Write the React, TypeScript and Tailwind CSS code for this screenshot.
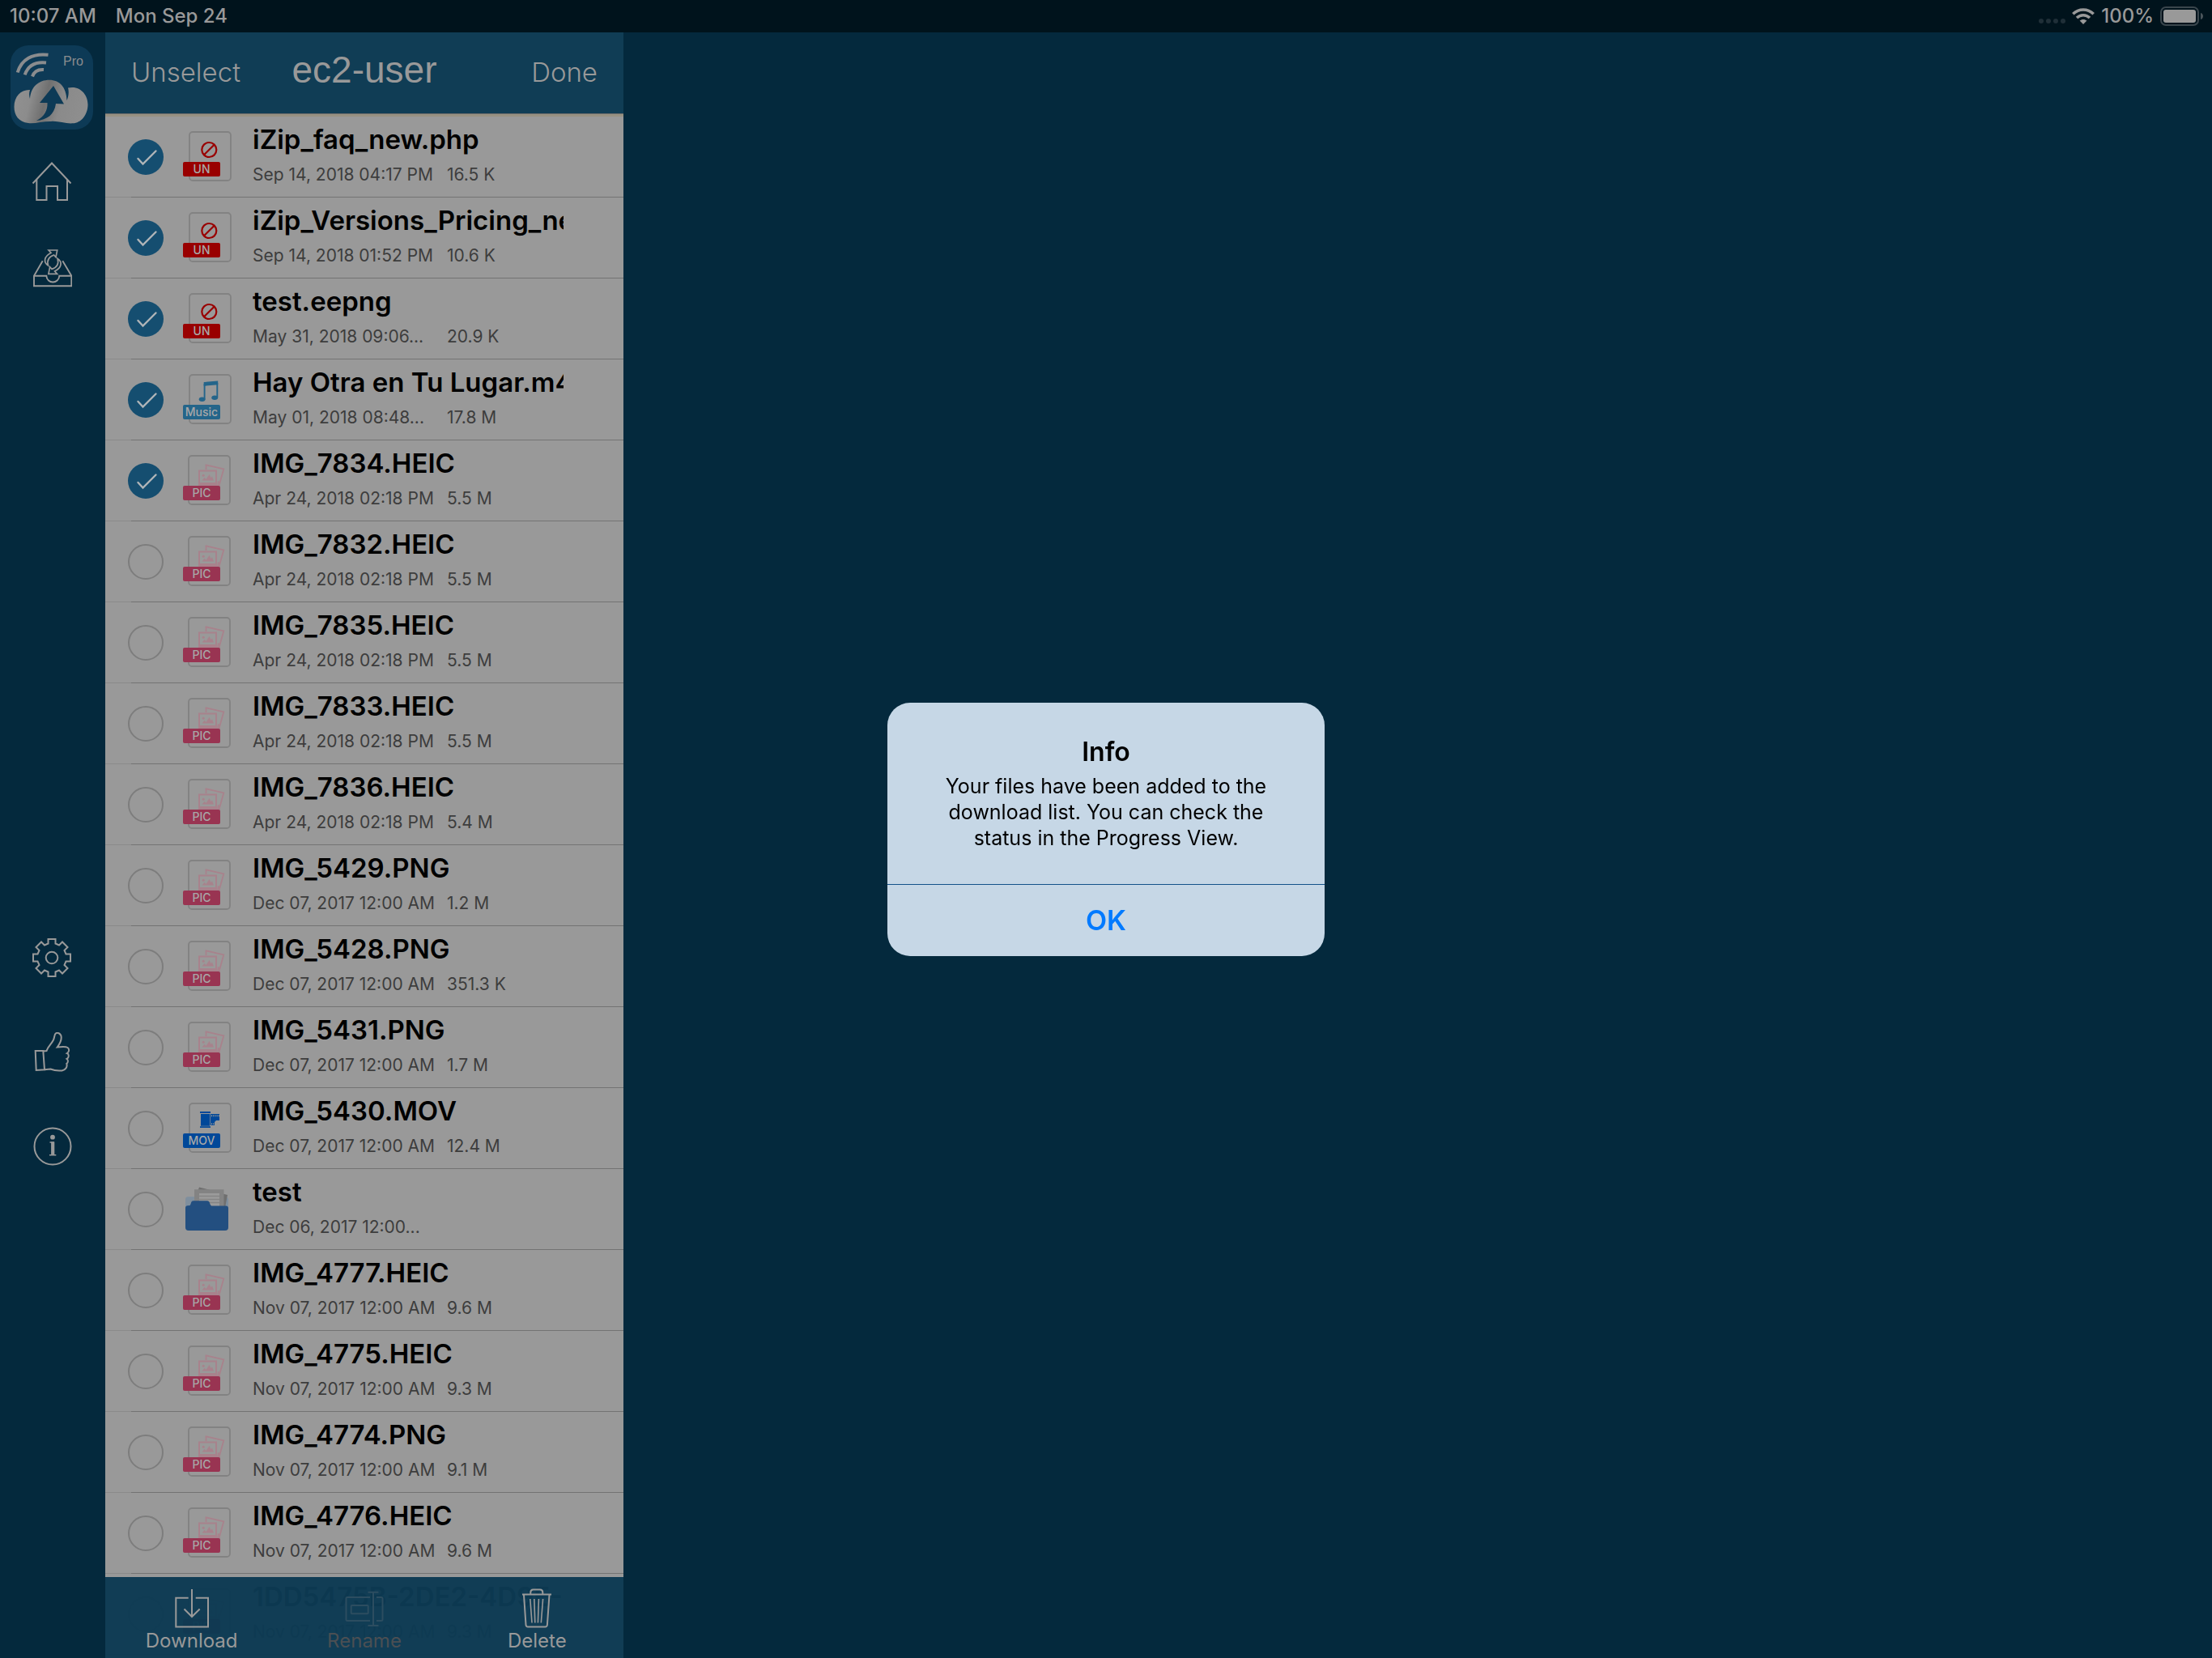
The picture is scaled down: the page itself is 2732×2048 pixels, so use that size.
import React, { useState } from 'react';

type FileKind = 'un' | 'music' | 'pic' | 'mov' | 'folder';

interface FileItem {
  name: string;
  date: string;
  size?: string;
  kind: FileKind;
}

const FILES: FileItem[] = [
  { name: 'iZip_faq_new.php', date: 'Sep 14, 2018 04:17 PM', size: '16.5 K', kind: 'un' },
  { name: 'iZip_Versions_Pricing_new.php', date: 'Sep 14, 2018 01:52 PM', size: '10.6 K', kind: 'un' },
  { name: 'test.eepng', date: 'May 31, 2018 09:06...', size: '20.9 K', kind: 'un' },
  { name: 'Hay Otra en Tu Lugar.m4a', date: 'May 01, 2018 08:48...', size: '17.8 M', kind: 'music' },
  { name: 'IMG_7834.HEIC', date: 'Apr 24, 2018 02:18 PM', size: '5.5 M', kind: 'pic' },
  { name: 'IMG_7832.HEIC', date: 'Apr 24, 2018 02:18 PM', size: '5.5 M', kind: 'pic' },
  { name: 'IMG_7835.HEIC', date: 'Apr 24, 2018 02:18 PM', size: '5.5 M', kind: 'pic' },
  { name: 'IMG_7833.HEIC', date: 'Apr 24, 2018 02:18 PM', size: '5.5 M', kind: 'pic' },
  { name: 'IMG_7836.HEIC', date: 'Apr 24, 2018 02:18 PM', size: '5.4 M', kind: 'pic' },
  { name: 'IMG_5429.PNG', date: 'Dec 07, 2017 12:00 AM', size: '1.2 M', kind: 'pic' },
  { name: 'IMG_5428.PNG', date: 'Dec 07, 2017 12:00 AM', size: '351.3 K', kind: 'pic' },
  { name: 'IMG_5431.PNG', date: 'Dec 07, 2017 12:00 AM', size: '1.7 M', kind: 'pic' },
  { name: 'IMG_5430.MOV', date: 'Dec 07, 2017 12:00 AM', size: '12.4 M', kind: 'mov' },
  { name: 'test', date: 'Dec 06, 2017 12:00...', kind: 'folder' },
  { name: 'IMG_4777.HEIC', date: 'Nov 07, 2017 12:00 AM', size: '9.6 M', kind: 'pic' },
  { name: 'IMG_4775.HEIC', date: 'Nov 07, 2017 12:00 AM', size: '9.3 M', kind: 'pic' },
  { name: 'IMG_4774.PNG', date: 'Nov 07, 2017 12:00 AM', size: '9.1 M', kind: 'pic' },
  { name: 'IMG_4776.HEIC', date: 'Nov 07, 2017 12:00 AM', size: '9.6 M', kind: 'pic' },
  { name: '1DD5475B-2DE2-4D9E-', date: 'Nov 07, 2017 12:00 AM', size: '9.3 M', kind: 'pic' },
];

const App: React.FC = () => {
  const [selected, setSelected] = useState<string[]>(FILES.slice(0, 5).map(f => f.name));
  const [showInfo, setShowInfo] = useState(true);

  const toggle = (name: string) => {
    setSelected(prev => (prev.includes(name) ? prev.filter(n => n !== name) : [...prev, name]));
  };

  return (
    <div className="h-screen flex flex-col overflow-hidden bg-[#04293d] text-[#999999] font-['Inter',sans-serif]">
      <StatusBar />

      <div className="flex flex-1 min-h-0">
        <Sidebar />

        {/* File browser */}
        <section aria-label="Files" className="relative w-[640px] shrink-0 flex flex-col overflow-hidden bg-[#999999]">
          <header className="h-[100px] shrink-0 grid grid-cols-3 items-center px-8 bg-[#103d55]">
            <button onClick={() => setSelected([])} className="justify-self-start text-[33px] font-light">Unselect</button>
            <h1 className="justify-self-center whitespace-nowrap pb-2 text-[46px] leading-none font-['Liberation_Sans',sans-serif]">ec2-user</h1>
            <button className="justify-self-end text-[33px] font-light">Done</button>
          </header>
          <div className="h-1 shrink-0 border-t border-[#6d6c6a] bg-[#979182]" />

          <ul className="flex-1 min-h-0 overflow-hidden">
            {FILES.map(file => (
              <FileRow
                key={file.name}
                file={file}
                checked={selected.includes(file.name)}
                onToggle={() => toggle(file.name)}
              />
            ))}
          </ul>

          <footer className="absolute inset-x-0 bottom-0 h-[100px] grid grid-cols-3 bg-[#0c3a53]/97 text-[24px]">
            <button className="flex flex-col items-center pt-[14px]">
              <DownloadIcon />
              <span className="leading-8">Download</span>
            </button>
            <button disabled className="flex flex-col items-center pt-[14px] text-[#4b4f53]">
              <RenameIcon />
              <span className="leading-8">Rename</span>
            </button>
            <button className="flex flex-col items-center pt-[14px]">
              <TrashIcon />
              <span className="leading-8">Delete</span>
            </button>
          </footer>
        </section>

        <main className="flex-1" />
      </div>

      {showInfo && (
        <div className="fixed inset-0 flex items-center justify-center">
          <div role="alertdialog" aria-labelledby="info-title" className="w-[540px] overflow-hidden rounded-[28px] bg-[#c6d7e6] text-center text-black">
            <div className="px-14 py-[41px]">
              <h2 id="info-title" className="text-[32px] leading-10 font-semibold">Info</h2>
              <p className="mt-[6px] text-[25px] leading-8">
                Your files have been added to the download list. You can check the status in the Progress View.
              </p>
            </div>
            <button
              onClick={() => setShowInfo(false)}
              className="h-[89px] w-full border-t border-[#14528a] text-[34px] font-semibold text-[#007aff]"
            >
              OK
            </button>
          </div>
        </div>
      )}
    </div>
  );
};

function StatusBar() {
  return (
    <div className="h-10 shrink-0 flex items-center justify-between pl-3 pr-[10px] bg-[#00131c] text-[24px] font-medium">
      <div className="flex gap-6">
        <span>10:07 AM</span>
        <span>Mon Sep 24</span>
      </div>
      <div className="flex items-center gap-2">
        <div className="flex gap-[3px] pt-3">
          <span className="size-[6px] rounded-sm bg-[#1f2f38]" />
          <span className="size-[6px] rounded-sm bg-[#1f2f38]" />
          <span className="size-[6px] rounded-sm bg-[#1f2f38]" />
          <span className="size-[6px] rounded-sm bg-[#1f2f38]" />
        </div>
        <svg width="28" height="20" viewBox="0 0 28 20" fill="none" stroke="currentColor" strokeWidth="3.6">
          <path d="M1.3 7.2C8.5 0.2 19.500 0.2 26.700 7.2" />
          <path d="M6 12C10.600 7.600 17.400 7.600 22 12" />
          <path d="M14 20L9.600 15.600C12.200 13.400 15.800 13.400 18.400 15.600Z" fill="currentColor" stroke="none" />
        </svg>
        <span>100%</span>
        <svg width="54" height="24" viewBox="0 0 54 24">
          <rect x="1" y="1" width="46" height="22" rx="6" fill="none" stroke="#3a464d" strokeWidth="2" />
          <rect x="4" y="4" width="40" height="16" rx="3" fill="#999999" />
          <path d="M50 8C54 9 54 15 50 16Z" fill="#4a545a" />
        </svg>
      </div>
    </div>
  );
}

function Sidebar() {
  return (
    <nav className="w-[130px] shrink-0 flex flex-col items-center pt-4 pb-[6px] pr-[2px]">
      <AppLogo />
      <button aria-label="Home" className="mt-10">
        <svg width="48" height="48" viewBox="0 0 48 48" fill="none" stroke="currentColor" strokeWidth="2">
          <path d="M0.500 26.500L24 1.500L47.500 26.500" />
          <path d="M5.300 21.500V47H17.500V30H31V47H43V21.500" />
        </svg>
      </button>
      <button aria-label="Transfers" className="mt-[58px]">
        <svg width="50" height="50" viewBox="-1 0 50 50" fill="none" stroke="currentColor" strokeWidth="1.900">
          <path d="M12.700 16.300L2 34.700V47.300H48.300V34.700L37.300 16.300" />
          <path d="M2 34.700H17.300C18 45 32.600 45 33.300 34.700H48.300" />
          <g strokeWidth="1.700">
            <path d="M20 3H30.700L29 11.700L26.500 9C21 11 17.500 15 19.500 22C13.500 18 14 11 23 6.300Z" />
            <path transform="rotate(180 25.300 17.700)" d="M20 3H30.700L29 11.700L26.500 9C21 11 17.500 15 19.500 22C13.500 18 14 11 23 6.300Z" />
          </g>
        </svg>
      </button>

      <div className="grow-4" />

      <button aria-label="Settings">
        <svg width="48" height="48" viewBox="0 0 48 48" fill="none" stroke="currentColor" strokeWidth="2">
          <path d="M19.500 1H28.500V6.500L33 8.500L37 4.500L43.500 11L39.500 15L41.500 19.500H47V28.500H41.500L39.500 33L43.500 37L37 43.500L33 39.500L28.500 41.500V47H19.500V41.500L15 39.500L11 43.500L4.500 37L8.500 33L6.500 28.500H1V19.500H6.500L8.500 15L4.500 11L11 4.500L15 8.500L19.500 6.500Z" />
          <circle cx="24" cy="24" r="7.300" />
        </svg>
      </button>
      <button aria-label="Like" className="mt-[68px]">
        <svg width="48" height="49" viewBox="0 0 48 49" fill="none" stroke="currentColor" strokeWidth="2">
          <path d="M3.700 23H13.300L15 46.300L4.700 47Z" />
          <path d="M13.500 23.500L17.500 23C19 17.500 23 15.500 26 9.500C27.600 6 27 2.500 29 1.300C31.500 0 34 1.500 35.300 4C36.600 8 34 14 30.700 18.500C35 18 41 17.300 43.500 19C46 21 45.500 24.500 42.800 26C45.500 27 45.500 31.500 42.500 33C44.500 34.500 44.300 37.500 42.300 38.800C43.500 43 41 46.500 36.500 47.400C31 48 27 47.400 22.300 45.500L15 46.300" />
        </svg>
      </button>
      <button aria-label="About" className="mt-[68px]">
        <svg width="48" height="48" viewBox="-1 0 48 48" fill="none" stroke="currentColor" strokeWidth="2" className="overflow-visible">
          <circle cx="24" cy="24" r="22.500" />
          <circle cx="24" cy="12.700" r="2.900" fill="currentColor" stroke="none" />
          <path d="M24.200 18.500V34.500" strokeWidth="4.200" />
          <path d="M20.500 19H26M20 34.700H28.300" strokeWidth="1.400" />
        </svg>
      </button>

      <div className="grow-3" />
    </nav>
  );
}

function AppLogo() {
  return (
    <svg width="102" height="104" viewBox="0 0 102 104" className="shrink-0">
      <defs>
        <linearGradient id="cloud" x1="0" y1="0" x2="1" y2="0.150">
          <stop offset="0" stopColor="#929292" />
          <stop offset="0.280" stopColor="#8c8c8c" />
          <stop offset="0.480" stopColor="#707070" />
          <stop offset="0.700" stopColor="#8a8a8a" />
          <stop offset="1" stopColor="#8e8e8e" />
        </linearGradient>
      </defs>
      <rect width="102" height="104" rx="22" fill="#0d3a56" />
      <g fill="none" stroke="#8a8c8e" strokeWidth="4">
        <path d="M8.700 33.500C13.500 17.500 27 9.500 46.500 11.800" />
        <path d="M17.700 36.300C21.500 25.500 30.500 20 44 21.500" />
        <path d="M27 38.500C29 32.500 33.500 29.500 41 30" />
      </g>
      <text x="65" y="24.500" fontSize="16" fill="#8a8c8e" className="font-['Liberation_Sans',sans-serif]">Pro</text>
      <path
        fill="url(#cloud)"
        d="M22 96C10 95 4.500 86 4.500 76C4.500 63 13 54.500 24 55C22.800 59 22.800 62 24 66C25 51 35 42.700 48 42.700C60 42.700 69 51 69.500 68C71.500 64 72.500 58 71 52.500C86 49 95.500 61 95.500 73C95.500 86 87 96 77 96.300C68 97 58 93 50 94C42 93.500 30 97 22 96Z"
      />
      <path fill="#0d3a56" d="M53 50L36 71H45.500C46 80 42 88 32 93C45 92 54 86 56 72L66 72.500Z" />
    </svg>
  );
}

interface FileRowProps {
  file: FileItem;
  checked: boolean;
  onToggle: () => void;
}

function FileRow({ file, checked, onToggle }: FileRowProps) {
  return (
    <li className="h-[100px] flex flex-col">
      <label className="flex-1 flex pl-7">
        <span className="relative mt-7 size-11 shrink-0">
          <input
            type="checkbox"
            checked={checked}
            onChange={onToggle}
            className="peer block size-11 appearance-none rounded-full border-2 border-[#7d7d7d] checked:border-0 checked:bg-[#154e70]"
          />
          <svg viewBox="0 0 44 44" fill="none" stroke="#b0b5b8" strokeWidth="2.400" strokeLinecap="round" className="absolute inset-0 size-11 hidden peer-checked:block pointer-events-none">
            <path d="M12.500 24L18.500 30.500L34.500 14.500" />
          </svg>
        </span>
        <span className="ml-6 mt-[18px] shrink-0">
          <FileIcon kind={file.kind} />
        </span>
        <span className="ml-[26px] pt-2 w-96 block">
          <span className="block h-10 overflow-hidden whitespace-nowrap text-[33px] leading-10 font-semibold text-black">{file.name}</span>
          <span className="mt-3 flex text-[21px] leading-6 whitespace-nowrap text-[#3d3d3d]">
            <span className="w-60">{file.date}</span>
            <span>{file.size}</span>
          </span>
        </span>
      </label>
      <div className="flex h-px">
        <div className="w-8 bg-[#8a8a8a]" />
        <div className="flex-1 bg-[#737373]" />
      </div>
    </li>
  );
}

function FileIcon({ kind }: { kind: FileKind }) {
  if (kind === 'folder') {
    return (
      <svg width="60" height="62" viewBox="0 0 60 62">
        <path d="M3 20C3 17.500 4 16.300 6 16.300H16V30H3Z" fill="#7f8f9e" />
        <path d="M48 17H53C55 17 56 18 56 20V32H48Z" fill="#7f8f9e" />
        <path d="M20 4.500L34 8L30 14L18 10ZM47 12L55 14L52 30H47Z" fill="#6f6f6f" />
        <path d="M14 7.300H50.500V30H14Z" fill="#838383" />
        <path d="M20 12H45V30H20Z" fill="#9b9b9b" />
        <path d="M20 15.500H45M20 19.500H45M20 23.500H45" stroke="#858585" strokeWidth="1.500" />
        <path d="M3 30C3 28.500 4 27.500 5.500 27.300L8.500 27C10.500 25 9.500 21.300 13 21.300H30C33.500 21.300 32.500 25.500 35 27.500H53C55 27.500 56 28.500 56 30.500V54C56 56.800 54.800 58 52 58H7C4.200 58 3 56.800 3 54Z" fill="#234f80" />
      </svg>
    );
  }

  return (
    <svg width="60" height="62" viewBox="0 0 60 62">
      <rect x={kind === 'pic' ? 7 : 8} y="1" width="51" height="60" rx="4" fill="none" stroke="#828282" strokeWidth="1.800" />
      {kind === 'un' && (
        <>
          <circle cx="32.300" cy="23" r="9" fill="none" stroke="#990000" strokeWidth="2.200" />
          <path d="M26 29.300L38.600 16.700" stroke="#990000" strokeWidth="2.200" />
          <Badge label="UN" fill="#990000" />
        </>
      )}
      {kind === 'music' && (
        <>
          <path d="M25.700 10L43.200 8.500V13.300L25.700 14.800Z" fill="#24658a" />
          <path d="M26.600 12V31.500M42.300 11V29" stroke="#24658a" strokeWidth="1.900" />
          <ellipse cx="23.600" cy="31.300" rx="3.900" ry="2.700" fill="#24658a" />
          <ellipse cx="39.200" cy="29.300" rx="3.900" ry="2.700" fill="#24658a" />
          <Badge label="Music" fill="#24658a" />
        </>
      )}
      {kind === 'pic' && (
        <>
          <path d="M28.500 18V12.300L50.300 17.300L44.500 38" fill="none" stroke="#a8828c" strokeWidth="1.800" />
          <path d="M43 32L46 33L44.500 38H42Z" fill="#a8828c" />
          <rect x="20" y="19.500" width="21" height="20" fill="none" stroke="#a8828c" strokeWidth="2" />
          <path d="M20 34H41V39H20Z" fill="#a8828c" />
          <circle cx="25.200" cy="25.300" r="1.500" fill="#a8828c" />
          <path d="M23.500 31.500L26.500 28L28.500 30L32.500 24L34.500 28L36 26.500L38 31.500Z" fill="#a8828c" />
          <Badge label="PIC" fill="#993452" />
        </>
      )}
      {kind === 'mov' && (
        <>
          <path d="M21 11H34V13H21ZM22 14H33V28.700H22ZM21 29.200H34V31H21Z" fill="#004899" />
          <path d="M33.700 14H45V22H41L39 24V28H33.700Z" fill="#004899" />
          <path d="M35 16.200H45M35 26.300H39" stroke="#999999" strokeWidth="2" strokeDasharray="1 1.200" />
          <Badge label="MOV" fill="#004899" />
        </>
      )}
    </svg>
  );
}

function Badge({ label, fill }: { label: string; fill: string }) {
  return (
    <>
      <rect y="38" width="46" height="18" rx="2" fill={fill} />
      <text x="23" y="52" textAnchor="middle" fontSize="14" fill="#a8a8a8" className="font-medium">{label}</text>
    </>
  );
}

function DownloadIcon() {
  return (
    <svg width="48" height="49" viewBox="0 0 48 49" fill="none" stroke="currentColor" strokeWidth="2">
      <path d="M19.700 11.700H4.300V47.500H44V11.700H28.700" />
      <path d="M24 1V35M14.500 25.500L24 35L33.700 25.500" />
    </svg>
  );
}

function RenameIcon() {
  return (
    <svg width="48" height="49" viewBox="0 0 48 49" fill="none" stroke="#2c4d60" strokeWidth="2">
      <path d="M31 11H3C2 11 1.500 11.500 1.500 12.500V38.500C1.500 39.500 2 40 3 40H31" />
      <path d="M39 11H44.500C46 11 46.500 11.500 46.500 12.500V38.500C46.500 39.500 46 40 44.500 40H39" />
      <rect x="7.700" y="21" width="21" height="10.300" rx="1" />
      <path d="M35 4.700V46M28.500 4.700H41.500M28.500 46H41.500" />
    </svg>
  );
}

function TrashIcon() {
  return (
    <svg width="48" height="49" viewBox="0 0 48 49" fill="none" stroke="currentColor" strokeWidth="2">
      <path d="M6 7.500H42M16.300 7.500V5C16.300 2.500 17.500 1.500 19.500 1.500H28C30 1.500 31.300 2.500 31.300 5V7.500" />
      <path d="M8 8L10.500 45C10.700 46.800 11.500 47.500 13 47.500H34.500C36 47.500 36.700 46.800 36.900 45L39.500 8" />
      <path d="M15.800 13L18 42.500M20.800 13L21.800 42.500M26.400 13L25.400 42.500M31.600 13L29.300 42.500" strokeWidth="1.600" />
    </svg>
  );
}

export default App;
